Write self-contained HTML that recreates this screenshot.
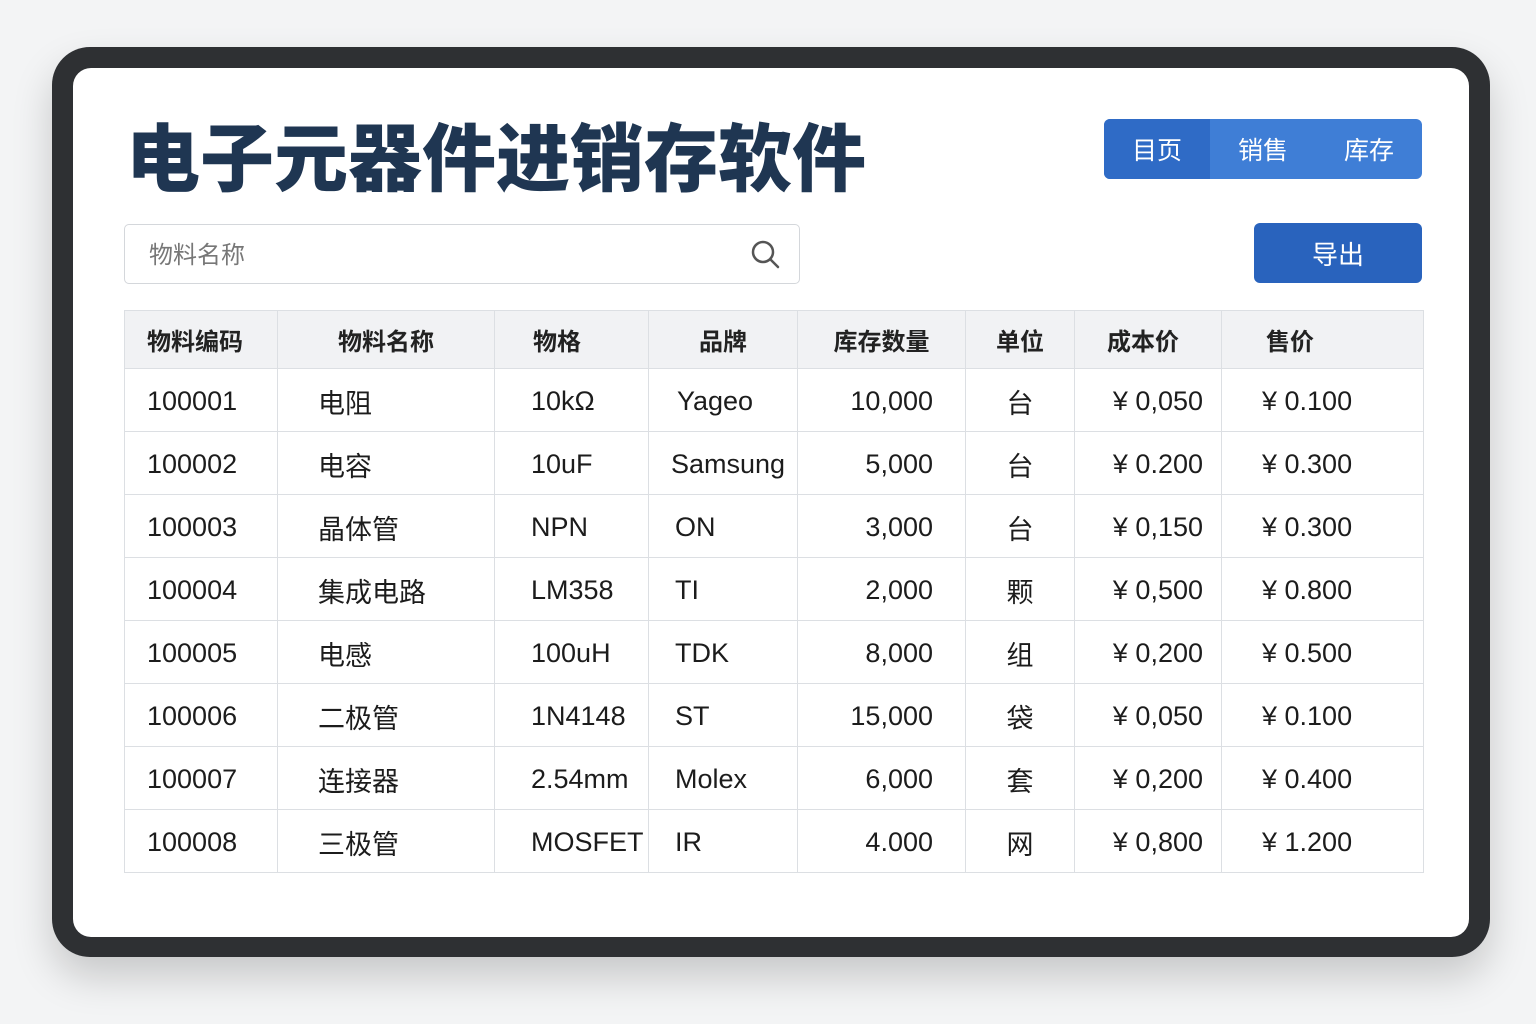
<!DOCTYPE html><html><head><meta charset="utf-8"><style>
body{margin:0;width:1536px;height:1024px;background:#f3f4f5;font-family:"Liberation Sans","Noto Sans CJK SC",sans-serif;position:relative;overflow:hidden}
.frame{position:absolute;left:52px;top:47px;width:1438px;height:910px;background:#2e3033;border-radius:38px;box-shadow:0 20px 40px rgba(0,0,0,.18)}
.inner{position:absolute;left:73px;top:68px;width:1396px;height:869px;background:#fff;border-radius:18px}
h1{position:absolute;left:126px;top:100px;margin:0;font-size:74px;font-weight:900;color:#1f3652;letter-spacing:0px;font-family:"Noto Sans CJK SC",sans-serif}
.nav{position:absolute;left:1104px;top:119px;width:318px;height:60px;border-radius:6px;background:#3f7ed6;display:flex;overflow:hidden;color:#fff;font-size:25px}
.nav div{flex:1;display:flex;align-items:center;justify-content:center}
.nav div:first-child{background:#2f6bc6}
.search{position:absolute;left:124px;top:224px;width:674px;height:58px;border:1px solid #d4d7db;border-radius:5px;color:#777;font-size:24px;line-height:62px;box-sizing:content-box}
.search span{margin-left:24px}
.export{position:absolute;left:1254px;top:223px;width:168px;height:60px;border-radius:6px;background:#2963bd;color:#fff;font-size:26px;display:flex;align-items:center;justify-content:center}
table{position:absolute;left:124px;top:310px;border-collapse:collapse;font-size:27px;color:#1c1c1c}
td,th{border:1px solid #dcdfe3;height:63px;padding:0;box-sizing:border-box}
td{padding-top:3px}
th{background:#f1f2f4;font-weight:bold;height:58px;font-size:24px;color:#222}
td{padding-left:22px}
.r{text-align:right;padding-right:32px;padding-left:0}
.c{text-align:center;padding-left:0}
</style></head><body>
<div class="frame"></div><div class="inner"></div>
<h1>电子元器件进销存软件</h1>
<div class="nav"><div>目页</div><div>销售</div><div>库存</div></div>
<div class="search"><span>物料名称</span><svg style="position:absolute;right:18px;top:15px" width="30" height="30" viewBox="0 0 30 30"><circle cx="12" cy="12" r="10" fill="none" stroke="#555" stroke-width="2.5"/><line x1="19.5" y1="19.5" x2="27" y2="27" stroke="#555" stroke-width="2.5" stroke-linecap="round"/></svg></div>
<div class="export">导出</div>
<table>
<colgroup><col style="width:153px"><col style="width:217px"><col style="width:154px"><col style="width:149px"><col style="width:168px"><col style="width:109px"><col style="width:147px"><col style="width:202px"></colgroup>
<tr><th style="text-align:left;padding-left:22px">物料编码</th><th>物料名称</th><th style="text-align:left;padding-left:38px">物格</th><th>品牌</th><th>库存数量</th><th style="text-align:left;padding-left:30px">单位</th><th style="text-align:left;padding-left:32px">成本价</th><th style="text-align:left;padding-left:44px">售价</th></tr>
<tr><td>100001</td><td style="padding-left:40px">电阻</td><td style="padding-left:36px">10kΩ</td><td style="padding-left:28px">Yageo</td><td class="r">10,000</td><td class="c">台</td><td class="r" style="padding-right:18px">¥ 0,050</td><td style="padding-left:40px">¥ 0.100</td></tr>
<tr><td>100002</td><td style="padding-left:40px">电容</td><td style="padding-left:36px">10uF</td><td style="padding-left:22px">Samsung</td><td class="r">5,000</td><td class="c">台</td><td class="r" style="padding-right:18px">¥ 0.200</td><td style="padding-left:40px">¥ 0.300</td></tr>
<tr><td>100003</td><td style="padding-left:40px">晶体管</td><td style="padding-left:36px">NPN</td><td style="padding-left:26px">ON</td><td class="r">3,000</td><td class="c">台</td><td class="r" style="padding-right:18px">¥ 0,150</td><td style="padding-left:40px">¥ 0.300</td></tr>
<tr><td>100004</td><td style="padding-left:40px">集成电路</td><td style="padding-left:36px">LM358</td><td style="padding-left:26px">TI</td><td class="r">2,000</td><td class="c">颗</td><td class="r" style="padding-right:18px">¥ 0,500</td><td style="padding-left:40px">¥ 0.800</td></tr>
<tr><td>100005</td><td style="padding-left:40px">电感</td><td style="padding-left:36px">100uH</td><td style="padding-left:26px">TDK</td><td class="r">8,000</td><td class="c">组</td><td class="r" style="padding-right:18px">¥ 0,200</td><td style="padding-left:40px">¥ 0.500</td></tr>
<tr><td>100006</td><td style="padding-left:40px">二极管</td><td style="padding-left:36px">1N4148</td><td style="padding-left:26px">ST</td><td class="r">15,000</td><td class="c">袋</td><td class="r" style="padding-right:18px">¥ 0,050</td><td style="padding-left:40px">¥ 0.100</td></tr>
<tr><td>100007</td><td style="padding-left:40px">连接器</td><td style="padding-left:36px">2.54mm</td><td style="padding-left:26px">Molex</td><td class="r">6,000</td><td class="c">套</td><td class="r" style="padding-right:18px">¥ 0,200</td><td style="padding-left:40px">¥ 0.400</td></tr>
<tr><td>100008</td><td style="padding-left:40px">三极管</td><td style="padding-left:36px">MOSFET</td><td style="padding-left:26px">IR</td><td class="r">4.000</td><td class="c">网</td><td class="r" style="padding-right:18px">¥ 0,800</td><td style="padding-left:40px">¥ 1.200</td></tr>
</table>
</body></html>
